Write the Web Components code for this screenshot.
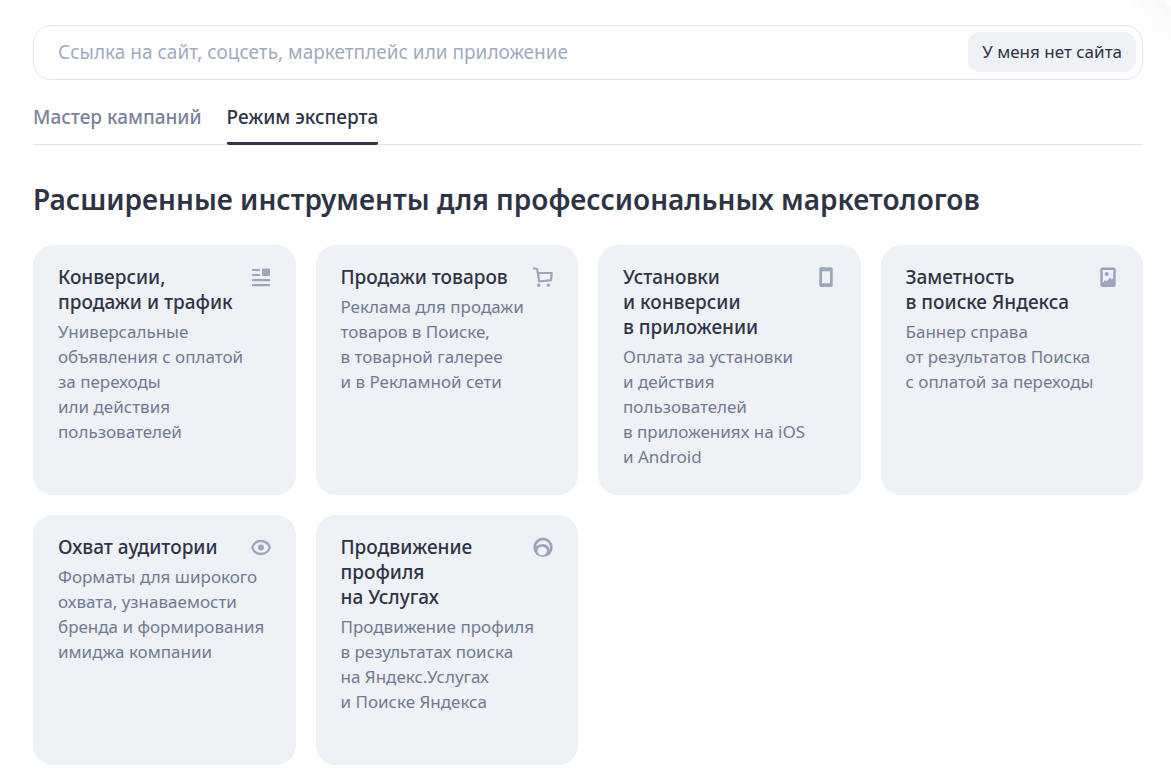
<!DOCTYPE html>
<html lang="ru">
<head>
<meta charset="utf-8">
<title>Новая кампания</title>
<style>
  body { margin: 0; background: #fff; }
</style>
</head>
<body>
<campaign-page></campaign-page>

<script>
const define = (name, html) => customElements.define(name, class extends HTMLElement {
  constructor() {
    super();
    const t = document.createElement('template');
    t.innerHTML = html;
    this.attachShadow({ mode: 'open' }).append(t.content.cloneNode(true));
  }
});

define('site-link-field', `
<style>
  :host { display: block; }
  form { display: flex; box-sizing: border-box; margin: 0; padding: 6px 6px 7px 24px; border: 1px solid #e2e4f0; border-radius: 18px; background: #fff; }
  input { flex: 1; min-width: 0; padding: 0; border: 0; outline: 0; background: none; font: inherit; font-size: 19px; line-height: 25px; color: #2d3446; }
  input::placeholder { color: #a1abc0; opacity: 1; }
  button { height: 40px; padding: 0 14px 2px; border: 0; border-radius: 12px; background: #eef1f6; font: inherit; font-size: 17px; color: #2d3446; white-space: nowrap; }
</style>
<form>
  <input type="text" aria-label="Ссылка" placeholder="Ссылка на сайт, соцсеть, маркетплейс или приложение">
  <button type="button">У меня нет сайта</button>
</form>`);

define('mode-tabs', `
<style>
  :host { display: block; }
  nav { display: flex; gap: 25px; border-bottom: 1px solid #e2e5f0; }
</style>
<nav><slot></slot></nav>`);

define('mode-tab', `
<style>
  :host { display: block; color: #79839a; margin-bottom: -1px; }
  :host([selected]) { color: #2d3446; }
  a { display: block; padding: 0 0 12px; border-bottom: 3px solid transparent; border-radius: 2px; font-size: 19px; font-weight: 500; line-height: 25px; color: inherit; text-decoration: none; white-space: nowrap; }
  :host([selected]) a { border-color: #2d3446; }
</style>
<a href="#"><slot></slot></a>`);

define('tool-card', `
<style>
  :host { display: block; }
  a { display: block; box-sizing: border-box; height: 100%; min-height: 250px; padding: 20px 25px 25px; border-radius: 20px; background: #eef1f6; color: #707b93; text-decoration: none; white-space: nowrap; }
  header { display: flex; justify-content: space-between; margin-bottom: 4px; }
  h2 { flex: 1; min-width: 0; margin: 0; font-size: 19px; font-weight: 500; line-height: 25px; color: #2d3446; }
  p { margin: 0; font-size: 17px; line-height: 25px; }
  ::slotted(svg) { flex: none; display: block; width: 20px; height: 20px; margin-top: 2px; color: #9ba6bd; }
</style>
<a href="#">
  <header><h2><slot name="title"></slot></h2><slot name="icon"></slot></header>
  <p><slot></slot></p>
</a>`);

define('campaign-page', `
<style>
  :host { display: block; position: relative; overflow: hidden; box-sizing: border-box; min-height: 100vh; padding: 25px 28px 12px 33px; font-family: "Noto Sans", "Open Sans", sans-serif; }
  mode-tabs { margin-top: 25px; }
  h1 { margin: 34px 0 26px; font-size: 28px; font-weight: 600; line-height: 40px; color: #2d3446; }
  .grid { display: grid; grid-template-columns: repeat(4, minmax(0, 1fr)); gap: 20px; }
  .corner { position: absolute; top: -88px; right: -92px; width: 100px; height: 100px; border-radius: 20px; background: #fff; box-shadow: 0 10px 60px rgba(60, 70, 110, .08); }
</style>
<div class="corner"></div>
<site-link-field></site-link-field>
<mode-tabs>
  <mode-tab>Мастер кампаний</mode-tab>
  <mode-tab selected>Режим эксперта</mode-tab>
</mode-tabs>
<h1>Расширенные инструменты для профессиональных маркетологов</h1>
<div class="grid">
  <tool-card>
    <span slot="title">Конверсии,<br>продажи и трафик</span>
    <svg slot="icon" viewBox="0 0 20 20" fill="currentColor"><rect x="1" y="2" width="8" height="2" rx=".6"/><rect x="1" y="7" width="8" height="2" rx=".6"/><rect x="11" y="1.600" width="8" height="7.400" rx="1"/><rect x="1" y="12" width="18" height="2.200" rx=".6"/><rect x="1" y="17" width="18" height="2.200" rx=".6"/></svg>
    Универсальные<br>объявления с оплатой<br>за переходы<br>или действия<br>пользователей
  </tool-card>
  <tool-card>
    <span slot="title">Продажи товаров</span>
    <svg slot="icon" viewBox="0 0 20 20" fill="none" stroke="currentColor" stroke-width="2.200" stroke-linejoin="round"><path d="M0 1.500h2.600Q4 1.500 4.300 3L6.300 14.500l11.700-1.300.7-7.200H5"/><circle cx="5.700" cy="18.300" r="1.700" fill="currentColor" stroke="none"/><circle cx="15.500" cy="18.300" r="1.700" fill="currentColor" stroke="none"/></svg>
    Реклама для продажи<br>товаров в Поиске,<br>в товарной галерее<br>и в Рекламной сети
  </tool-card>
  <tool-card>
    <span slot="title">Установки<br>и конверсии<br>в приложении</span>
    <svg slot="icon" viewBox="0 0 20 20" fill="currentColor" fill-rule="evenodd"><path d="M5 .3h10q1.700 0 1.700 1.700v16.300q0 1.700-1.700 1.700H5q-1.700 0-1.700-1.700V2Q3.300.3 5 .3zm1 4v12h8v-12z"/></svg>
    Оплата за установки<br>и действия<br>пользователей<br>в приложениях на iOS<br>и Android
  </tool-card>
  <tool-card>
    <span slot="title">Заметность<br>в поиске Яндекса</span>
    <svg slot="icon" viewBox="0 0 20 20" fill="currentColor" fill-rule="evenodd"><path d="M4.300.5h11.400q2 0 2 2v15.500q0 2-2 2H4.300q-2 0-2-2V2.500q0-2 2-2zM4.800 3v13L7 13l1.500 1.500 3.500-4 1.500 2 1.700-1.500V3z"/><circle cx="8.700" cy="7" r="2"/></svg>
    Баннер справа<br>от результатов Поиска<br>с оплатой за переходы
  </tool-card>
  <tool-card>
    <span slot="title">Охват аудитории</span>
    <svg slot="icon" viewBox="0 0 20 20" fill="none" stroke="currentColor" stroke-width="2.300"><path d="M1.200 10.500C2.700 6 6 4 10 4s7.300 2 8.800 6.500c-1.500 4.500-4.800 6.500-8.800 6.500s-7.300-2-8.800-6.500z"/><circle cx="10" cy="10.500" r="3" fill="currentColor" stroke="none"/></svg>
    Форматы для широкого<br>охвата, узнаваемости<br>бренда и формирования<br>имиджа компании
  </tool-card>
  <tool-card>
    <span slot="title">Продвижение<br>профиля<br>на Услугах</span>
    <svg slot="icon" viewBox="0 0 20 20"><circle cx="10" cy="10.300" r="9.700" fill="currentColor"/><path d="M3 9.500C4.500 4.500 8.500 2.800 12 3.800c3.800 1.200 5.500 5 5 9C15.500 7.500 9.500 4.800 3 9.500z" fill="#eef1f6"/><ellipse cx="9.200" cy="14" rx="4.800" ry="4.200" fill="#eef1f6"/></svg>
    Продвижение профиля<br>в результатах поиска<br>на Яндекс.Услугах<br>и Поиске Яндекса
  </tool-card>
</div>`);
</script>
</body>
</html>
